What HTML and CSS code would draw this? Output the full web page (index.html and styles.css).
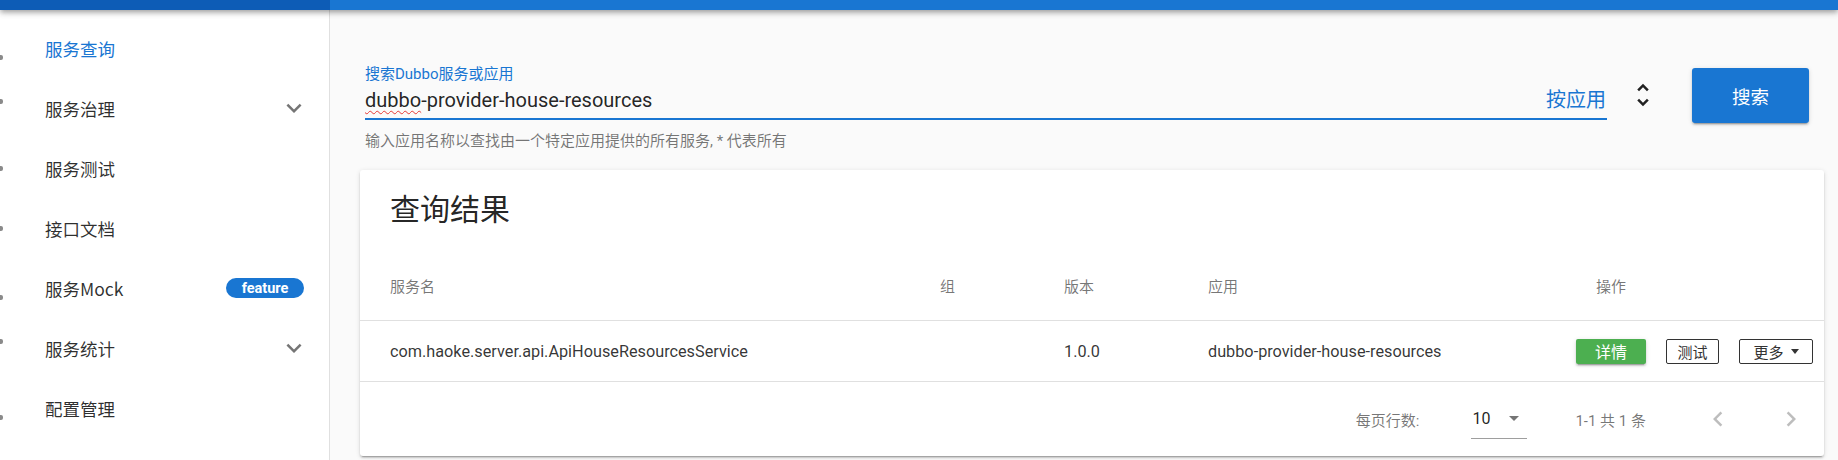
FILE: index.html
```html
<!DOCTYPE html>
<html lang="zh-CN">
<head>
<meta charset="utf-8">
<title>Dubbo Admin - 服务查询</title>
<link rel="stylesheet" href="styles.css">
</head>
<body>
<div class="app">
  <header class="topbar">
    <div class="topbar-side"></div>
    <div class="topbar-main"></div>
  </header>
  <div class="layout">
    <nav class="sidebar">
      <a class="nav-item active"><span class="mark mk-low"></span><span class="nav-text">服务查询</span></a>
      <a class="nav-item"><span class="mark mk-high"></span><span class="nav-text">服务治理</span>
        <svg class="chev" viewBox="0 0 24 24"><path d="M7.41 8.59L12 13.17l4.59-4.58L18 10l-6 6-6-6 1.41-1.41z"/></svg></a>
      <a class="nav-item"><span class="mark"></span><span class="nav-text">服务测试</span></a>
      <a class="nav-item"><span class="mark"></span><span class="nav-text">接口文档</span></a>
      <a class="nav-item"><span class="mark mk-low"></span><span class="nav-text">服务Mock</span><span class="badge">feature</span></a>
      <a class="nav-item"><span class="mark mk-high"></span><span class="nav-text">服务统计</span>
        <svg class="chev" viewBox="0 0 24 24"><path d="M7.41 8.59L12 13.17l4.59-4.58L18 10l-6 6-6-6 1.41-1.41z"/></svg></a>
      <a class="nav-item"><span class="mark mk-low"></span><span class="nav-text">配置管理</span></a>
    </nav>
    <main class="main">
      <div class="search-row">
        <div class="field">
          <label class="field-label">搜索Dubbo服务或应用</label>
          <div class="field-input">
            <span class="input-value"><span class="spell">dubbo</span>-provider-house-resources</span>
            <span class="suffix">按应用</span>
          </div>
          <div class="hint">输入应用名称以查找由一个特定应用提供的所有服务, * 代表所有</div>
        </div>
        <svg class="unfold" viewBox="0 0 24 24"><path d="M12 5.83L15.17 9l1.41-1.41L12 3 7.41 7.59 8.83 9 12 5.83zm0 12.34L8.83 15l-1.41 1.41L12 21l4.59-4.59L15.17 15 12 18.17z"/></svg>
        <button class="btn-search">搜索</button>
      </div>
      <section class="card">
        <h2 class="card-title">查询结果</h2>
        <div class="row head">
          <div class="cell">服务名</div>
          <div class="cell">组</div>
          <div class="cell">版本</div>
          <div class="cell">应用</div>
          <div class="cell">操作</div>
        </div>
        <div class="row body">
          <div class="cell">com.haoke.server.api.ApiHouseResourcesService</div>
          <div class="cell"></div>
          <div class="cell">1.0.0</div>
          <div class="cell">dubbo-provider-house-resources</div>
          <div class="cell actions">
            <button class="btn btn-detail">详情</button>
            <button class="btn btn-outline btn-test">测试</button>
            <button class="btn btn-outline btn-more">更多<span class="caret"></span></button>
          </div>
        </div>
        <div class="pager">
          <span class="pg-label">每页行数:</span>
          <div class="pg-select"><span class="pg-value">10</span><span class="pg-caret"></span></div>
          <span class="pg-range">1-1 共 1 条</span>
          <button class="pg-btn pg-prev"><svg viewBox="0 0 24 24"><path d="M15.41 7.41L14 6l-6 6 6 6 1.41-1.41L10.83 12z"/></svg></button>
          <button class="pg-btn pg-next"><svg viewBox="0 0 24 24"><path d="M8.59 16.59L10 18l6-6-6-6-1.41 1.41L13.17 12z"/></svg></button>
        </div>
      </section>
    </main>
  </div>
</div>
</body>
</html>
```
FILE: styles.css
```css
html, body {
  margin: 0;
  padding: 0;
}
body {
  width: 1838px;
  height: 460px;
  overflow: hidden;
  background: #fafafa;
  font-family: Roboto, "Noto Sans CJK SC", sans-serif;
  color: rgba(0, 0, 0, 0.87);
}
.app {
  display: flex;
  flex-direction: column;
  height: 460px;
}
.topbar {
  display: flex;
  height: 10px;
  flex: 0 0 10px;
  position: relative;
  z-index: 2;
  box-shadow: 0 2px 4px -1px rgba(0,0,0,.2), 0 4px 5px 0 rgba(0,0,0,.14), 0 1px 10px 0 rgba(0,0,0,.12);
}
.topbar-side {
  width: 330px;
  background: #0d5cb6;
}
.topbar-main {
  flex: 1;
  background: #1976d2;
}
.layout {
  display: flex;
  flex: 1;
}
.sidebar {
  width: 330px;
  box-sizing: border-box;
  border-right: 1px solid #e0e0e0;
  background: #fff;
  padding-top: 8px;
}
.nav-item {
  display: flex;
  align-items: center;
  height: 60px;
  padding-right: 20px;
  font-family: "Noto Sans CJK SC", sans-serif;
  font-size: 17.5px;
  color: rgba(0, 0, 0, 0.82);
  text-decoration: none;
}
.nav-item.active {
  color: #1976d2;
}
.mark {
  width: 3px;
  height: 5px;
  background: #8a8a8a;
  margin-right: 42px;
  border-radius: 0 2px 2px 0;
}
.mark.mk-low {
  margin-top: 18px;
}
.mark.mk-high {
  margin-bottom: 14px;
}
.nav-text {
  flex: 1;
}
.chev {
  width: 30px;
  height: 30px;
  fill: #757575;
}
.badge {
  width: 78px;
  height: 20px;
  border-radius: 10px;
  background: #1976d2;
  color: #fff;
  font-family: Roboto, sans-serif;
  font-weight: 700;
  font-size: 14.5px;
  display: flex;
  align-items: center;
  justify-content: center;
  margin-right: 5px;
}
.main {
  flex: 1;
  padding: 0 14px 0 30px;
}
.search-row {
  display: flex;
  align-items: flex-start;
  margin-top: 55px;
  padding: 0 15px 0 5px;
}
.field {
  flex: 1;
}
.field-label {
  display: block;
  font-size: 15px;
  line-height: 18px;
  color: #1976d2;
}
.field-input {
  display: flex;
  align-items: center;
  margin-top: 5px;
  height: 24px;
  padding-bottom: 6px;
  border-bottom: 2px solid #1976d2;
}
.input-value {
  flex: 1;
  font-size: 20px;
  line-height: 24px;
  color: rgba(0, 0, 0, 0.87);
}
.spell {
  text-decoration: underline wavy #e53935;
  text-decoration-thickness: 1px;
  text-underline-offset: 3px;
}
.suffix {
  font-size: 20px;
  line-height: 24px;
  color: #1976d2;
  margin-right: 1px;
}
.hint {
  margin-top: 12px;
  font-size: 15px;
  line-height: 18px;
  color: rgba(0, 0, 0, 0.54);
}
.unfold {
  width: 30px;
  height: 30px;
  margin: 15px 0 0 21px;
  fill: #212121;
}
.btn-search {
  width: 117px;
  height: 55px;
  margin: 3px 0 0 34px;
  border: 0;
  border-radius: 3px;
  background: #1976d2;
  color: #fff;
  font-family: "Noto Sans CJK SC", sans-serif;
  font-size: 18.5px;
  box-shadow: 0 3px 1px -2px rgba(0,0,0,.2), 0 2px 2px 0 rgba(0,0,0,.14), 0 1px 5px 0 rgba(0,0,0,.12);
}
.card {
  margin-top: 20px;
  background: #fff;
  border-radius: 3px;
  box-shadow: 0 3px 1px -2px rgba(0,0,0,.2), 0 2px 2px 0 rgba(0,0,0,.14), 0 1px 5px 0 rgba(0,0,0,.12);
}
.card-title {
  margin: 0;
  padding: 20px 30px;
  font-size: 30px;
  line-height: 40px;
  font-weight: 400;
  color: rgba(0, 0, 0, 0.87);
}
.row {
  display: grid;
  grid-template-columns: 550px 124px 144px 388px 1fr;
  align-items: center;
  border-bottom: 1px solid rgba(0, 0, 0, 0.12);
}
.row.head {
  height: 70px;
  font-size: 15px;
  color: rgba(0, 0, 0, 0.54);
}
.row.body {
  height: 60px;
  font-size: 16.25px;
  color: rgba(0, 0, 0, 0.8);
}
.cell {
  padding-left: 30px;
  white-space: nowrap;
}
.cell.actions {
  padding-left: 10px;
  display: flex;
  align-items: center;
  gap: 20px;
}
.btn {
  height: 25px;
  box-sizing: border-box;
  padding: 0;
  border-radius: 2px;
  font-family: "Noto Sans CJK SC", sans-serif;
  font-size: 15px;
  display: inline-flex;
  align-items: center;
  justify-content: center;
}
.btn-detail {
  width: 70px;
  border: 0;
  background: #4caf50;
  color: #fff;
  font-size: 16px;
  box-shadow: 0 3px 1px -2px rgba(0,0,0,.2), 0 2px 2px 0 rgba(0,0,0,.14), 0 1px 5px 0 rgba(0,0,0,.12);
}
.btn-outline {
  border: 1px solid #333;
  background: #fff;
  color: #333;
}
.btn-test {
  width: 53px;
}
.btn-more {
  width: 74px;
}
.caret {
  width: 0;
  height: 0;
  margin-left: 7px;
  border-left: 4px solid transparent;
  border-right: 4px solid transparent;
  border-top: 5px solid #333;
}
.pager {
  height: 74px;
  display: flex;
  align-items: center;
  justify-content: flex-end;
  padding-right: 15px;
  font-size: 15px;
  color: rgba(0, 0, 0, 0.54);
}
.pg-select {
  width: 56px;
  height: 40px;
  margin-left: 52px;
  box-sizing: border-box;
  border-bottom: 1px solid #9e9e9e;
  display: flex;
  align-items: center;
  padding-left: 1px;
}
.pg-value {
  font-size: 16px;
  color: rgba(0, 0, 0, 0.87);
}
.pg-caret {
  width: 0;
  height: 0;
  margin-left: 19px;
  border-left: 5px solid transparent;
  border-right: 5px solid transparent;
  border-top: 5px solid #757575;
}
.pg-range {
  margin-left: 48px;
}
.pg-btn {
  width: 36px;
  height: 36px;
  padding: 0;
  border: 0;
  background: transparent;
  display: flex;
  align-items: center;
  justify-content: center;
}
.pg-btn svg {
  width: 30px;
  height: 30px;
  fill: rgba(0, 0, 0, 0.26);
}
.pg-prev {
  margin-left: 54px;
}
.pg-next {
  margin-left: 37px;
}
```
